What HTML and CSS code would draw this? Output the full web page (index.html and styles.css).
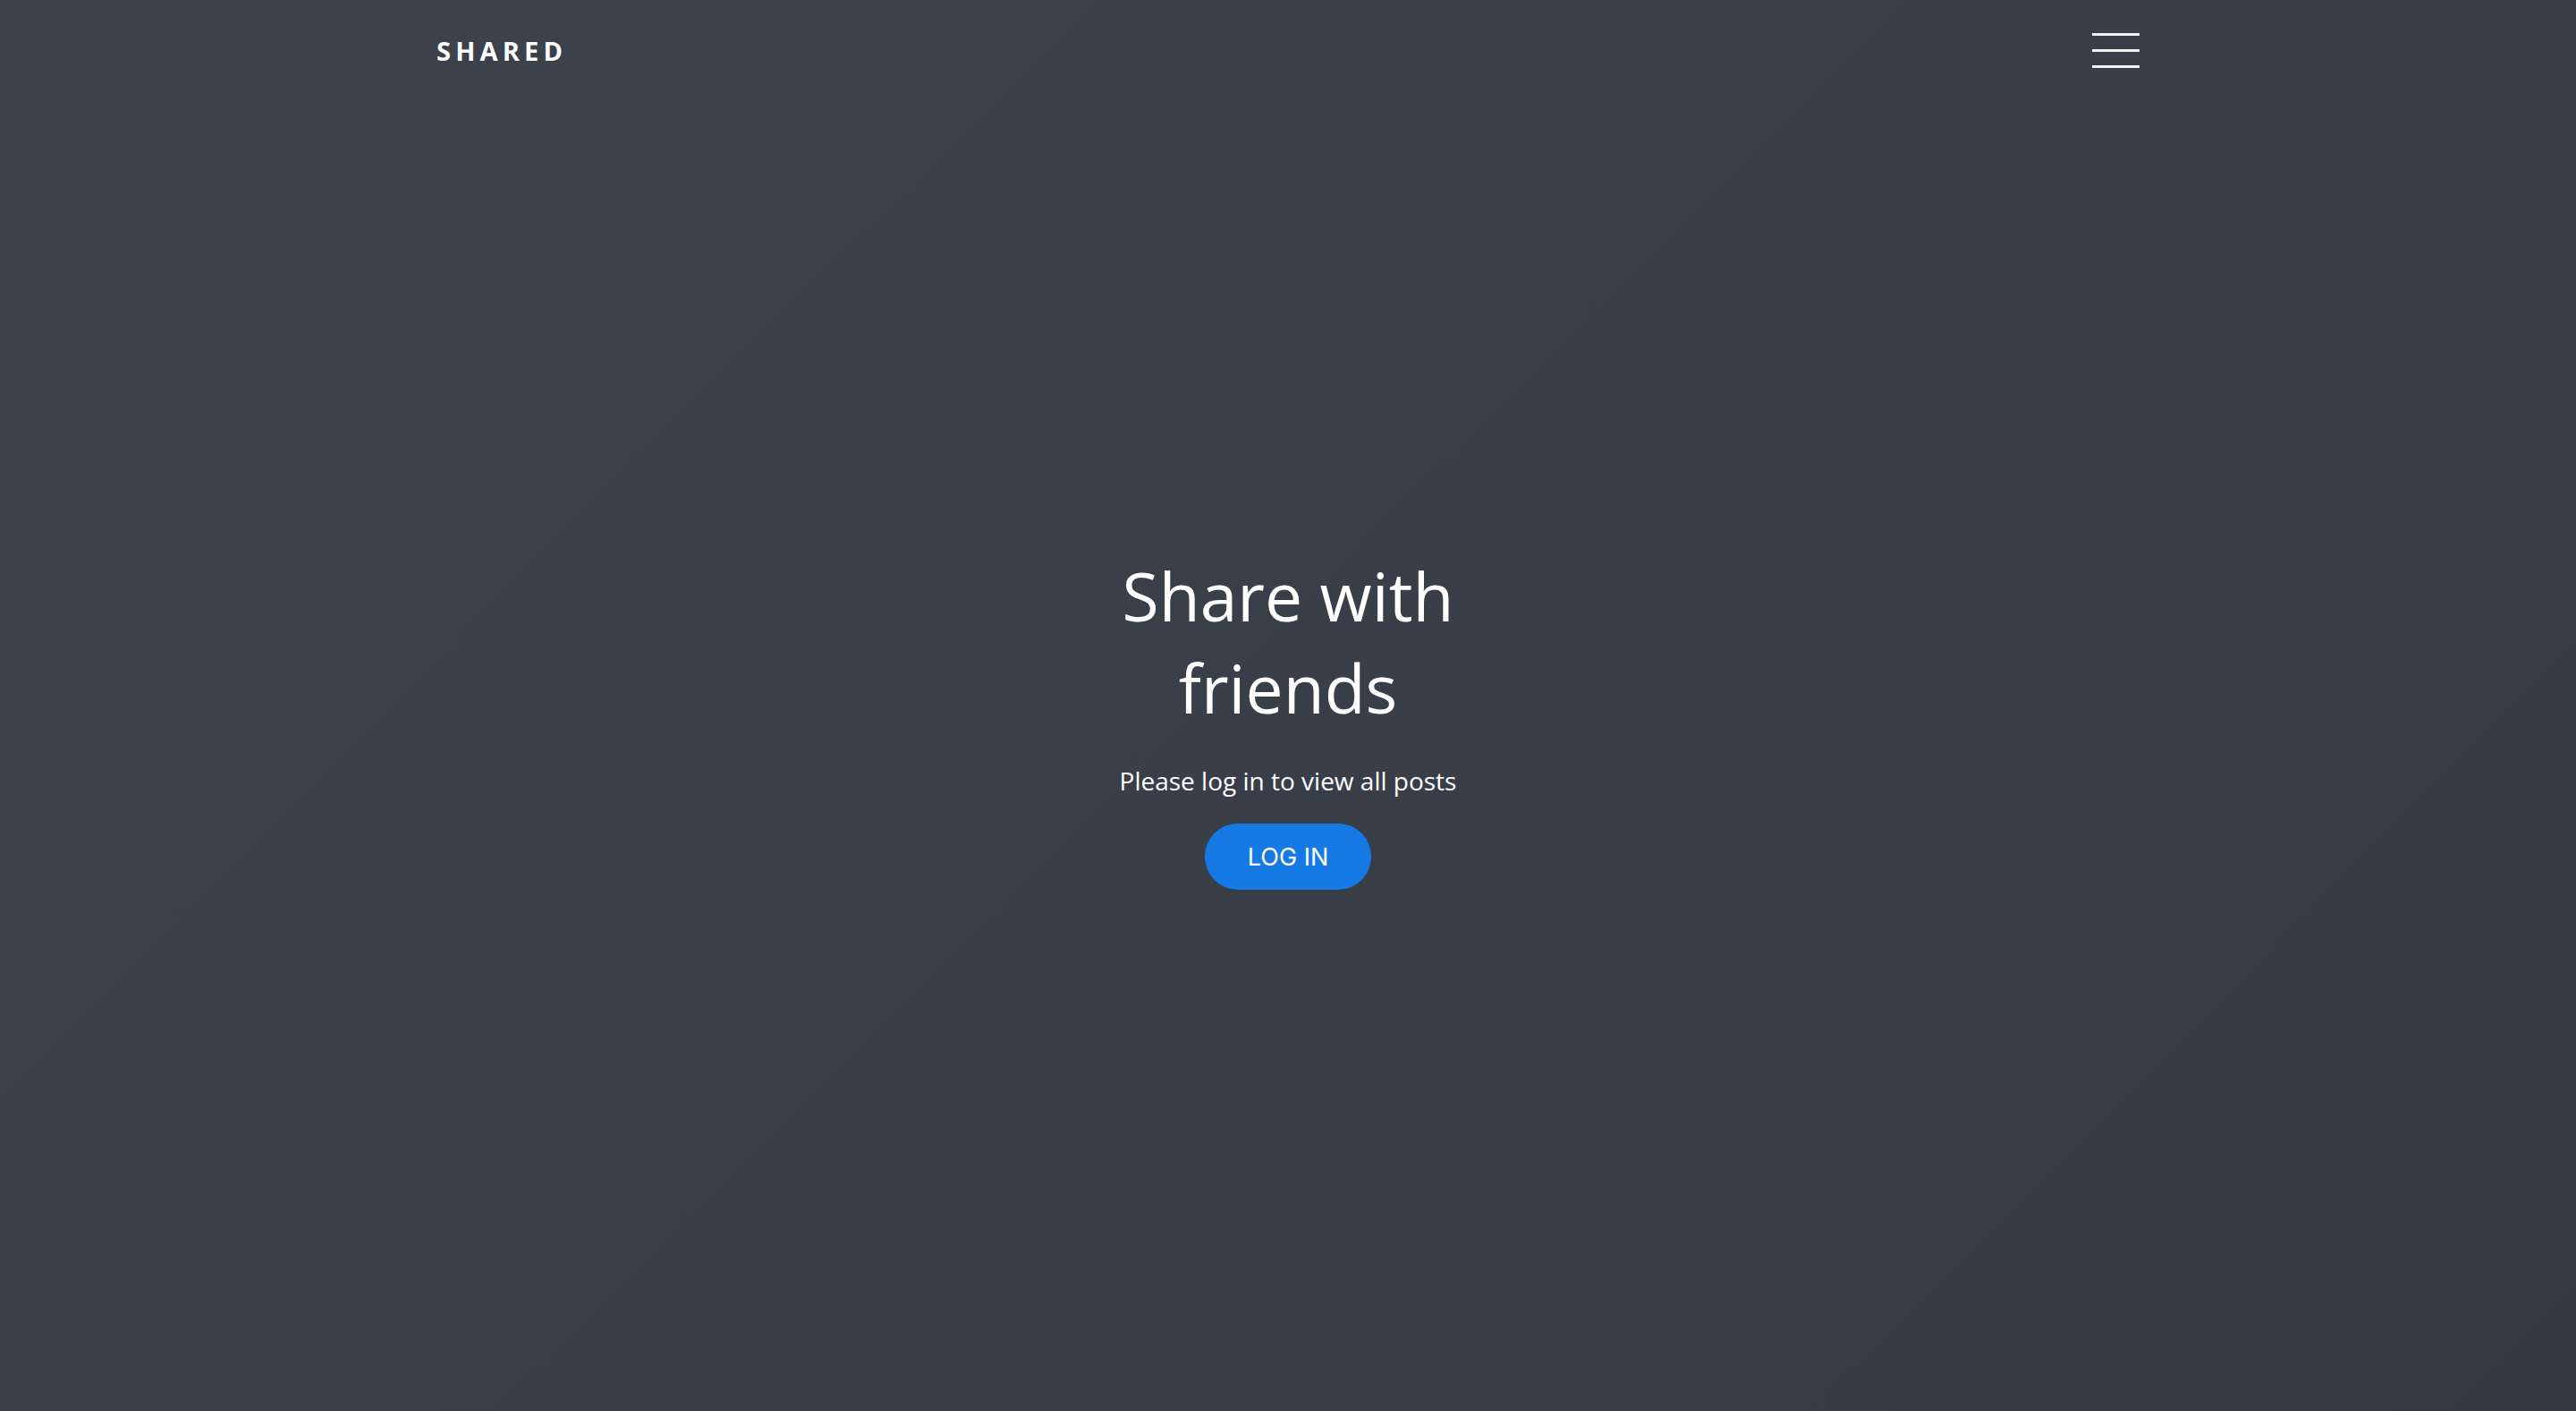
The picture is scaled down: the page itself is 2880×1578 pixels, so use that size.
FILE: index.html
```html
<!DOCTYPE html>
<html lang="en">
<head>
<meta charset="utf-8">
<title>Shared</title>
<link rel="stylesheet" href="styles.css">
</head>
<body>
<div class="page">
  <header class="topbar">
    <div class="logo">SHARED</div>
    <button class="menu" aria-label="Menu">
      <span class="bar"></span>
      <span class="bar"></span>
      <span class="bar"></span>
    </button>
  </header>
  <main class="hero">
    <div class="hero-inner">
      <h1 class="title">Share with friends</h1>
      <p class="subtitle">Please log in to view all posts</p>
      <a class="login" href="#">LOG IN</a>
    </div>
  </main>
</div>
</body>
</html>
```
FILE: styles.css
```css
html, body {
  margin: 0;
  padding: 0;
  height: 100%;
}
body {
  background: linear-gradient(135deg, #3c434d 0%, #383f49 50%, #343a44 100%);
  color: #ffffff;
  font-family: "Open Sans", "Liberation Sans", sans-serif;
}
.page {
  min-height: 100vh;
  display: flex;
  flex-direction: column;
}
.topbar {
  width: 1904px;
  margin: 0 auto;
  height: 113px;
  display: flex;
  align-items: center;
  justify-content: space-between;
}
.logo {
  font-size: 29px;
  font-weight: 700;
  letter-spacing: 5.2px;
  line-height: 1;
}
.menu {
  background: none;
  border: 0;
  padding: 0;
  width: 53px;
  display: flex;
  flex-direction: column;
  gap: 15px;
  cursor: pointer;
}
.bar {
  display: block;
  height: 3px;
  width: 53px;
  background: #f2f2f2;
}
.hero {
  flex: 1;
  display: flex;
  align-items: center;
  justify-content: center;
  padding-bottom: 81px;
}
.hero-inner {
  display: flex;
  flex-direction: column;
  align-items: center;
  text-align: center;
}
.title {
  margin: 0;
  width: 420px;
  font-size: 75px;
  font-weight: 400;
  line-height: 103px;
}
.subtitle {
  margin: 32px 0 0;
  font-size: 28px;
  line-height: 40px;
}
.login {
  margin-top: 28px;
  width: 186px;
  height: 74px;
  border-radius: 37px;
  background: #167ae5;
  color: #ffffff;
  text-decoration: none;
  font-family: "Inter", "Roboto", sans-serif;
  font-size: 27px;
  font-weight: 400;
  display: flex;
  align-items: center;
  justify-content: center;
}
```
